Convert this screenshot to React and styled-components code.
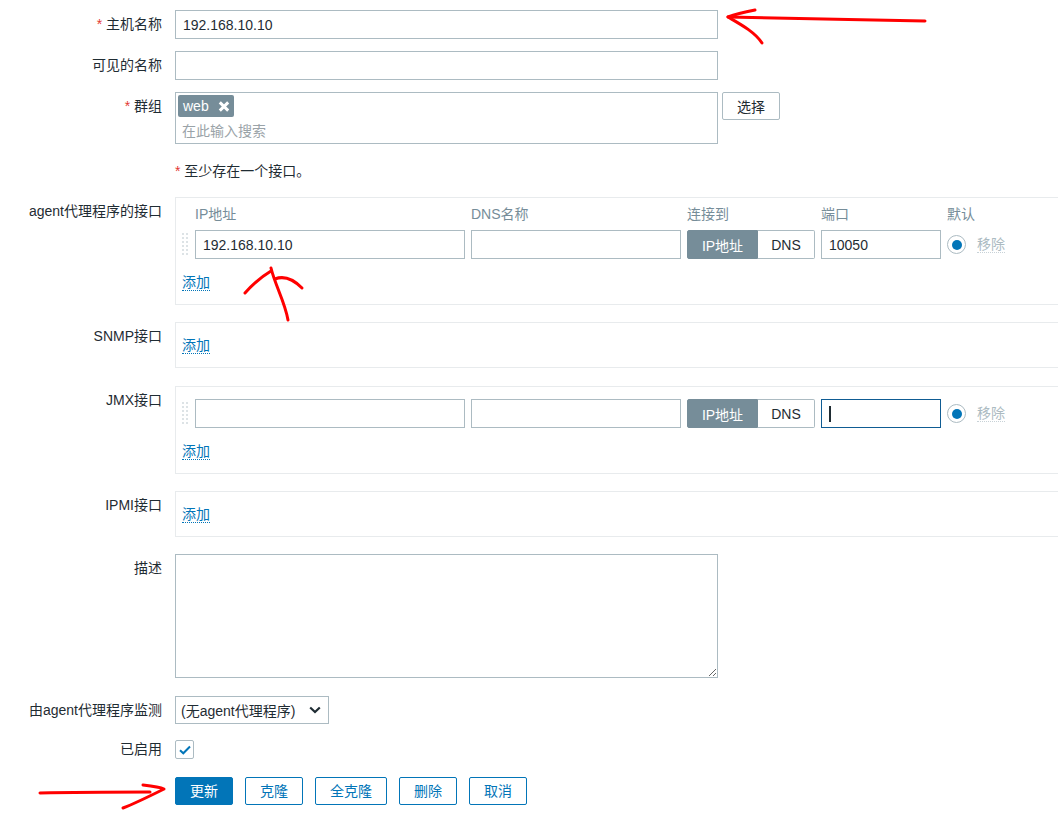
import React from 'react';
import styled, { createGlobalStyle } from 'styled-components';

const GlobalStyle = createGlobalStyle`
  html, body { margin: 0; padding: 0; background: #fff; overflow: hidden; }
  body {
    font-family: "Liberation Sans", Arial, "Noto Sans CJK SC", sans-serif;
    font-size: 14px;
    color: #1f2c33;
  }
  * { box-sizing: border-box; }
`;

const Page = styled.div`
  position: relative;
  width: 1058px;
  height: 819px;
  padding-top: 10px;
  overflow: hidden;
`;

const Row = styled.div`
  display: grid;
  grid-template-columns: 175px 1fr;
  margin-bottom: ${(p) => (p.$mb ?? 12)}px;
`;

const Label = styled.div`
  text-align: right;
  padding-right: 13px;
  padding-top: ${(p) => (p.$pt ?? 6)}px;
  line-height: 16px;
  white-space: nowrap;
`;

const Req = styled.span`
  color: #e33734;
`;

const Field = styled.div`
  display: flex;
  align-items: flex-start;
  min-width: 0;
`;

const TextInput = styled.input`
  width: ${(p) => p.$w}px;
  height: 29px;
  border: 1px solid #acbbc2;
  border-radius: 0;
  padding: 0 7px;
  font: inherit;
  color: inherit;
  background: #fff;
  outline: none;
`;

const FocusedInput = styled.div`
  width: ${(p) => p.$w}px;
  height: 29px;
  border: 1px solid #0f5c93;
  padding: 0 7px;
  display: flex;
  align-items: center;
  background: #fff;
`;

const Caret = styled.span`
  display: block;
  width: 2px;
  height: 16px;
  background: #1f2c33;
`;

const MultiSelect = styled.div`
  width: 543px;
  height: 52px;
  border: 1px solid #acbbc2;
  padding: 2px 2px 0 2px;
`;

const Tag = styled.span`
  display: inline-flex;
  align-items: center;
  gap: 9px;
  height: 22px;
  padding: 0 4px 0 5px;
  background: #768d99;
  color: #fff;
  border-radius: 2px;
  line-height: 22px;
`;

const SearchHint = styled.div`
  color: #9aa3a8;
  line-height: 16px;
  margin-top: 6px;
  padding-left: 4px;
`;

const PlainButton = styled.button`
  height: 28px;
  width: ${(p) => p.$w}px;
  margin-left: 4px;
  border: 1px solid #acbbc2;
  border-radius: 2px;
  background: #fff;
  color: #1f2c33;
  font: inherit;
  padding: 0;
`;

const Note = styled.div`
  line-height: 16px;
`;

const IfaceBox = styled.div`
  width: 900px;
  border: 1px solid #e8ebed;
  padding: ${(p) => p.$pt}px 6px 13px 6px;
`;

const IfaceGrid = styled.div`
  display: grid;
  grid-template-columns: 7px 270px 210px 128px 120px auto;
  column-gap: 6px;
  align-items: center;
`;

const HeadGrid = styled(IfaceGrid)`
  color: #768d99;
  line-height: 17px;
  margin-bottom: 7px;
`;

const Handle = styled.div`
  width: 7px;
  height: 23px;
  background:
    linear-gradient(to bottom, transparent 2px, #fff 2px) 0 0 / 4px 4px,
    linear-gradient(to right, #dde3e6 2px, transparent 2px) 0 0 / 4px 4px;
`;

const Toggle = styled.div`
  display: flex;
  height: 29px;
`;

const ToggleOpt = styled.span`
  width: ${(p) => p.$w}px;
  display: flex;
  align-items: center;
  justify-content: center;
  border: 1px solid ${(p) => (p.$active ? '#768d99' : '#acbbc2')};
  background: ${(p) => (p.$active ? '#768d99' : '#fff')};
  color: ${(p) => (p.$active ? '#fff' : '#1f2c33')};
  border-radius: ${(p) => (p.$active ? '2px 0 0 2px' : '0 2px 2px 0')};
  ${(p) => (p.$active ? '' : 'border-left: none;')}
`;

const DefaultCell = styled.div`
  display: flex;
  align-items: center;
  gap: 11px;
`;

const Radio = styled.span`
  width: 19px;
  height: 19px;
  border: 1px solid #acbbc2;
  border-radius: 50%;
  display: flex;
  align-items: center;
  justify-content: center;
  &::after {
    content: '';
    width: 10px;
    height: 10px;
    border-radius: 50%;
    background: #0275b8;
  }
`;

const Remove = styled.span`
  color: #acbbc2;
  line-height: 16px;
  border-bottom: 1px dotted #c8d2d7;
`;

const AddLink = styled.span`
  display: inline-block;
  color: #0275b8;
  line-height: 16px;
  border-bottom: 1px dotted #0275b8;
  margin-top: ${(p) => (p.$mt ?? 0)}px;
`;

const TextArea = styled.textarea`
  width: 543px;
  height: 124px;
  border: 1px solid #acbbc2;
  border-radius: 0;
  font: inherit;
  padding: 5px 7px;
  outline: none;
  resize: both;
  display: block;
`;

const SelectBox = styled.div`
  width: 154px;
  height: 28px;
  border: 1px solid #acbbc2;
  display: flex;
  align-items: center;
  justify-content: space-between;
  padding: 0 7px 0 5px;
  white-space: nowrap;
`;

const Checkbox = styled.span`
  width: 19px;
  height: 19px;
  border: 1px solid #acbbc2;
  border-radius: 2px;
  display: flex;
  align-items: center;
  justify-content: center;
`;

const ButtonRow = styled.div`
  display: flex;
  gap: 12px;
`;

const FormButton = styled.button`
  height: 28px;
  padding: 0 14px;
  border: 1px solid #0275b8;
  border-radius: 2px;
  background: ${(p) => (p.$primary ? '#0275b8' : '#fff')};
  color: ${(p) => (p.$primary ? '#fff' : '#0275b8')};
  font: inherit;
  line-height: 26px;
`;

const Overlay = styled.svg`
  position: absolute;
  left: 0;
  top: 0;
  pointer-events: none;
`;

const Empty = styled.span``;

function InterfaceRow({ ip, port, focused }) {
  return (
    <IfaceGrid>
      <Handle />
      <TextInput $w={270} readOnly value={ip} />
      <TextInput $w={210} readOnly value="" />
      <Toggle>
        <ToggleOpt $w={71} $active>IP地址</ToggleOpt>
        <ToggleOpt $w={57}>DNS</ToggleOpt>
      </Toggle>
      {focused ? (
        <FocusedInput $w={120}>
          <Caret />
        </FocusedInput>
      ) : (
        <TextInput $w={120} readOnly value={port} />
      )}
      <DefaultCell>
        <Radio />
        <Remove>移除</Remove>
      </DefaultCell>
    </IfaceGrid>
  );
}

export default function App() {
  return (
    <Page>
      <GlobalStyle />
      <Row>
        <Label><Req>* </Req>主机名称</Label>
        <Field><TextInput $w={543} readOnly value="192.168.10.10" /></Field>
      </Row>
      <Row>
        <Label>可见的名称</Label>
        <Field><TextInput $w={543} readOnly value="" /></Field>
      </Row>
      <Row $mb={19}>
        <Label><Req>* </Req>群组</Label>
        <Field>
          <MultiSelect>
            <Tag>
              web
              <svg width="12" height="11" viewBox="0 0 12 11">
                <path d="M1.8 1.4 L10.2 9.6 M10.2 1.4 L1.8 9.6" stroke="#fff" strokeWidth="3" />
              </svg>
            </Tag>
            <SearchHint>在此输入搜索</SearchHint>
          </MultiSelect>
          <PlainButton $w={58}>选择</PlainButton>
        </Field>
      </Row>
      <Row $mb={18}>
        <Empty />
        <Note><Req>* </Req>至少存在一个接口。</Note>
      </Row>
      <Row $mb={17}>
        <Label>agent代理程序的接口</Label>
        <IfaceBox $pt={8}>
          <HeadGrid>
            <Empty />
            <span>IP地址</span>
            <span>DNS名称</span>
            <span>连接到</span>
            <span>端口</span>
            <span>默认</span>
          </HeadGrid>
          <InterfaceRow ip="192.168.10.10" port="10050" />
          <AddLink $mt={15}>添加</AddLink>
        </IfaceBox>
      </Row>
      <Row $mb={18}>
        <Label>SNMP接口</Label>
        <IfaceBox $pt={14}>
          <AddLink>添加</AddLink>
        </IfaceBox>
      </Row>
      <Row $mb={17}>
        <Label>JMX接口</Label>
        <IfaceBox $pt={12}>
          <InterfaceRow ip="" port="" focused />
          <AddLink $mt={15}>添加</AddLink>
        </IfaceBox>
      </Row>
      <Row $mb={17}>
        <Label>IPMI接口</Label>
        <IfaceBox $pt={14}>
          <AddLink>添加</AddLink>
        </IfaceBox>
      </Row>
      <Row $mb={18}>
        <Label>描述</Label>
        <Field><TextArea readOnly value="" /></Field>
      </Row>
      <Row $mb={16}>
        <Label>由agent代理程序监测</Label>
        <Field>
          <SelectBox>
            <span>(无agent代理程序)</span>
            <svg width="12" height="8" viewBox="0 0 12 8">
              <path d="M1.2 1.5 L6 6 L10.8 1.5" fill="none" stroke="#1f2c33" strokeWidth="2.2" />
            </svg>
          </SelectBox>
        </Field>
      </Row>
      <Row $mb={18}>
        <Label $pt={1}>已启用</Label>
        <Field>
          <Checkbox>
            <svg width="12" height="10" viewBox="0 0 12 10">
              <path d="M1 5.2 L4.3 8.3 L11 1.5" fill="none" stroke="#0275b8" strokeWidth="2" />
            </svg>
          </Checkbox>
        </Field>
      </Row>
      <Row>
        <Empty />
        <ButtonRow>
          <FormButton $primary>更新</FormButton>
          <FormButton>克隆</FormButton>
          <FormButton>全克隆</FormButton>
          <FormButton>删除</FormButton>
          <FormButton>取消</FormButton>
        </ButtonRow>
      </Row>

      <Overlay width="1058" height="819" viewBox="0 0 1058 819">
        <g fill="none" stroke="#ff0000" strokeWidth="3" strokeLinecap="round" strokeLinejoin="round">
          <path d="M925 21 C 860 20, 790 18, 728 17" />
          <path d="M755 10 C 745 12, 736 14, 728 17 C 740 24, 755 32, 762 43" />
          <path d="M271 268 C 275 285, 285 302, 288 320" />
          <path d="M245 293 C 252 285, 261 277, 271 271" />
          <path d="M275 279 C 285 275, 295 281, 302 288" />
          <path d="M40 793 C 80 792, 120 792, 150 792" />
          <path d="M143 785 C 152 786, 160 787, 164 789 C 150 796, 136 803, 123 808" />
        </g>
      </Overlay>
    </Page>
  );
}
